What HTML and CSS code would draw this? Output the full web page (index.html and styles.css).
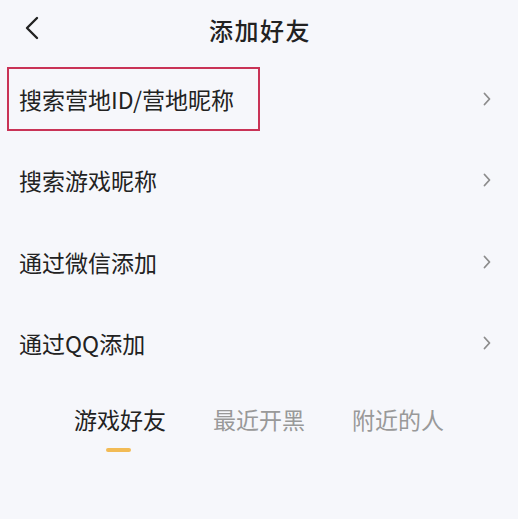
FILE: index.html
```html
<!DOCTYPE html>
<html>
<head>
    <title>添加好友</title>
    <meta name="viewport" content="width=device-width, initial-scale=1.0">
    <link rel="stylesheet" href="styles.css">
</head>
<body>
    <div class="page">
        <!-- 顶部导航 -->
        <div class="nav">
            <svg class="back" width="14" height="24" viewBox="0 0 14 24">
                <path d="M12 2 L2 12 L12 22" fill="none" stroke="#222" stroke-width="2.4" stroke-linecap="round" stroke-linejoin="round"/>
            </svg>
            <div class="nav-title">添加好友</div>
        </div>

        <!-- 添加方式 -->
        <div class="menu">
            <div class="menu-item">
                <span class="label highlight">搜索营地ID/营地昵称</span>
                <svg class="arrow" width="8" height="14" viewBox="0 0 8 14"><path d="M1.5 1.5 L6.5 7 L1.5 12.5" fill="none" stroke="#8c8c8c" stroke-width="1.8" stroke-linecap="round" stroke-linejoin="round"/></svg>
            </div>
            <div class="menu-item">
                <span class="label">搜索游戏昵称</span>
                <svg class="arrow" width="8" height="14" viewBox="0 0 8 14"><path d="M1.5 1.5 L6.5 7 L1.5 12.5" fill="none" stroke="#8c8c8c" stroke-width="1.8" stroke-linecap="round" stroke-linejoin="round"/></svg>
            </div>
            <div class="menu-item">
                <span class="label">通过微信添加</span>
                <svg class="arrow" width="8" height="14" viewBox="0 0 8 14"><path d="M1.5 1.5 L6.5 7 L1.5 12.5" fill="none" stroke="#8c8c8c" stroke-width="1.8" stroke-linecap="round" stroke-linejoin="round"/></svg>
            </div>
            <div class="menu-item">
                <span class="label">通过QQ添加</span>
                <svg class="arrow" width="8" height="14" viewBox="0 0 8 14"><path d="M1.5 1.5 L6.5 7 L1.5 12.5" fill="none" stroke="#8c8c8c" stroke-width="1.8" stroke-linecap="round" stroke-linejoin="round"/></svg>
            </div>
        </div>

        <!-- 标签页 -->
        <div class="tabs">
            <div class="tab active">游戏好友<i class="bar"></i></div>
            <div class="tab">最近开黑</div>
            <div class="tab">附近的人</div>
        </div>
    </div>
</body>
</html>
```

FILE: styles.css
```css
/* 基础样式 */
body {
    margin: 0;
    background: #f6f7fb;
    font-family: "Noto Sans CJK SC", "Noto Sans", sans-serif;
    color: #222;
}

.page {
    height: 519px;
}

/* 顶部导航 */
.nav {
    height: 58px;
    display: flex;
    align-items: center;
    justify-content: center;
    position: relative;
}

.back {
    position: absolute;
    left: 25px;
    top: 16px;
}

.nav-title {
    font-size: 24px;
    font-weight: 500;
    letter-spacing: 1.5px;
    margin-left: 2px;
}

/* 菜单列表 */
.menu-item {
    height: 81.5px;
    display: flex;
    align-items: center;
    justify-content: space-between;
    padding: 0 27px 0 19px;
}

.label {
    font-size: 23px;
}

.highlight {
    border: 2px solid #c93356;
    padding: 13px 24px 13px 10px;
    margin-left: -12px;
}

.arrow {
    display: block;
}

/* 标签页 */
.tabs {
    display: flex;
    justify-content: center;
    gap: 47px;
    padding-top: 18px;
}

.tab {
    font-size: 23px;
    color: #999;
    position: relative;
    height: 66px;
}

.tab.active {
    color: #222;
}

.bar {
    position: absolute;
    left: 32px;
    top: 46px;
    width: 25px;
    height: 4px;
    border-radius: 2px;
    background: #f2bb55;
}
```
